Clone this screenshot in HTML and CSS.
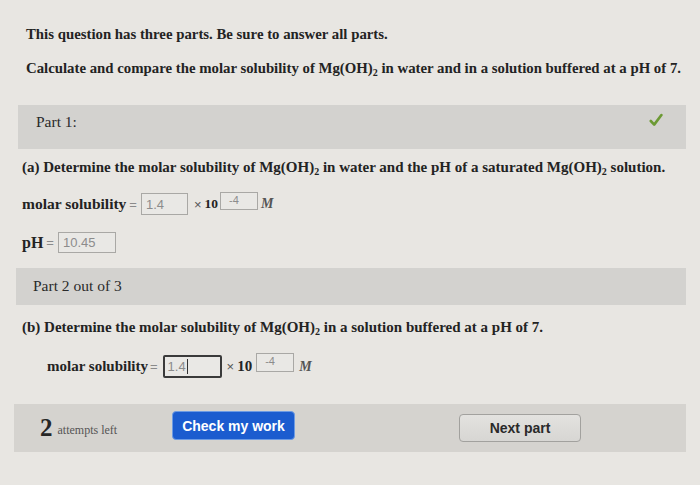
FILE: index.html
```html
<!DOCTYPE html>
<html lang="en">
<head>
    <meta charset="UTF-8">
    <meta name="viewport" content="width=device-width, initial-scale=1.0">
    <title>Molar solubility of Mg(OH)2</title>
    <link rel="stylesheet" href="styles.css">
</head>
<body>
    <main class="page">
        <p class="intro first">This question has three parts. Be sure to answer all parts.</p>
        <p class="intro">Calculate and compare the molar solubility of Mg(OH)<sub>2</sub> in water and in a solution buffered at a pH of 7.</p>

        <div class="part-bar part-one">
            <span>Part 1:</span>
            <svg class="check" width="14" height="14" viewBox="0 0 14 14">
                <path d="M1.8 8 L5.2 11.6 L12.4 2" fill="none" stroke="#6c9a34" stroke-width="2.6" stroke-linecap="round" stroke-linejoin="round"/>
            </svg>
        </div>

        <p class="question">(a) Determine the molar solubility of Mg(OH)<sub>2</sub> in water and the pH of a saturated Mg(OH)<sub>2</sub> solution.</p>

        <div class="answer-row">
            <span class="label">molar solubility</span><span class="eq">=</span>
            <span class="field mantissa">1.4</span>
            <span class="times">×</span><span class="ten">10</span>
            <span class="field exponent">-4</span>
            <span class="unit">M</span>
        </div>

        <div class="answer-row ph-row">
            <span class="label">pH</span><span class="eq">=</span>
            <span class="field ph">10.45</span>
        </div>

        <div class="part-bar part-two">
            <span>Part 2 out of 3</span>
        </div>

        <p class="question part-b">(b) Determine the molar solubility of Mg(OH)<sub>2</sub> in a solution buffered at a pH of 7.</p>

        <div class="answer-row indent">
            <span class="label">molar solubility</span><span class="eq">=</span>
            <span class="field mantissa focused">1.4<span class="caret"></span></span>
            <span class="times">×</span><span class="ten">10</span>
            <span class="field exponent">-4</span>
            <span class="unit">M</span>
        </div>

        <div class="action-bar">
            <div class="attempts"><span class="count">2</span> attempts left</div>
            <button class="btn check-btn">Check my work</button>
            <button class="btn next-btn">Next part</button>
        </div>
    </main>
</body>
</html>
```

FILE: styles.css
```css
body, html {
    margin: 0;
    padding: 0;
    width: 100%;
    height: 100%;
    background-color: #e8e6e2;
    font-family: "Liberation Serif", "Times New Roman", serif;
    color: #232323;
    overflow: hidden;
}

.page {
    padding: 24px 14px 0 14px;
}

sub {
    font-size: 10px;
    vertical-align: -3px;
    line-height: 0;
}

.intro {
    margin: 0;
    padding-left: 12px;
    font-size: 14.8px;
    font-weight: bold;
    line-height: 20px;
}

.intro.first {
    margin-bottom: 14px;
}

.part-bar {
    display: flex;
    align-items: flex-start;
    justify-content: space-between;
    background-color: #d3d2cf;
    color: #2a2a2a;
}

.part-one {
    margin: 27px 0 0 4px;
    height: 44px;
    padding: 8px 23px 0 18px;
    box-sizing: border-box;
    font-size: 15.5px;
}

.part-two {
    margin: 15px 0 0 2px;
    height: 37px;
    padding: 9px 18px 0 17px;
    box-sizing: border-box;
    font-size: 15.5px;
}

.question {
    margin: 8px 0 0 8px;
    font-size: 15px;
    font-weight: bold;
    line-height: 20px;
}

.part-b {
    margin-top: 12px;
}

.answer-row {
    display: flex;
    align-items: center;
    margin: 16px 0 0 8px;
    height: 22px;
    font-size: 15.5px;
}

.label {
    font-weight: bold;
}

.eq {
    color: #8a8a8a;
    font-family: "Liberation Sans", Arial, sans-serif;
    font-size: 13px;
    margin: 0 4px 0 3px;
}

.field {
    box-sizing: border-box;
    display: flex;
    align-items: center;
    border: 1px solid #a9a8a5;
    background-color: #e9e8e5;
    font-family: "Liberation Sans", Arial, sans-serif;
    color: #8c8c8c;
    font-size: 13px;
    padding-left: 4px;
}

.mantissa {
    width: 47px;
    height: 22px;
}

.exponent {
    width: 38px;
    height: 18px;
    align-self: flex-start;
    margin: -1px 0 0 2px;
    font-size: 11px;
    align-items: flex-start;
    padding: 1px 0 0 8px;
}

.times {
    font-family: "Liberation Sans", Arial, sans-serif;
    color: #555;
    font-size: 13px;
    margin: 0 3px 0 6px;
}

.ten {
    font-weight: bold;
    font-size: 13.5px;
}

.unit {
    font-style: italic;
    font-weight: bold;
    font-size: 14px;
    color: #555;
    margin-left: 3px;
}

.ph-row {
    margin-top: 17px;
    height: 21px;
    font-size: 16px;
}

.ph {
    width: 58px;
    height: 21px;
}

.indent {
    margin: 18px 0 0 33px;
    height: 23px;
    font-size: 15px;
}

.focused {
    width: 59px;
    height: 23px;
    border: 2px solid #3a3a3a;
    border-radius: 2px;
    padding-left: 3px;
}

.indent .eq {
    margin: 0 5px 0 2px;
}

.indent .times {
    margin-left: 5px;
}

.indent .ten {
    font-size: 15px;
}

.indent .exponent {
    width: 38px;
    height: 19px;
    margin-top: -2px;
    margin-left: 4px;
}

.indent .unit {
    margin-left: 5px;
}

.caret {
    display: inline-block;
    width: 1px;
    height: 15px;
    background-color: #333;
    margin-left: 1px;
}

.action-bar {
    display: flex;
    align-items: center;
    background-color: #d5d3cf;
    height: 48px;
    margin: 26px 0 0 0;
    padding: 0 0 0 26px;
}

.attempts {
    width: 132px;
    font-size: 12px;
    color: #555;
}

.count {
    font-size: 25px;
    font-weight: bold;
    color: #262626;
    vertical-align: -2px;
    margin-right: 2px;
}

.btn {
    box-sizing: border-box;
    font-family: "Liberation Sans", Arial, sans-serif;
    font-size: 14px;
    font-weight: bold;
    border-radius: 4px;
}

.check-btn {
    width: 123px;
    height: 29px;
    margin-top: -5px;
    background-color: #1b5ccf;
    color: #fff;
    border: 1px solid #6d9be3;
}

.next-btn {
    width: 122px;
    height: 28px;
    margin-left: 164px;
    background: linear-gradient(#e3e2df, #d7d6d3);
    color: #2a2a2a;
    border: 1px solid #a2a19e;
}
```
